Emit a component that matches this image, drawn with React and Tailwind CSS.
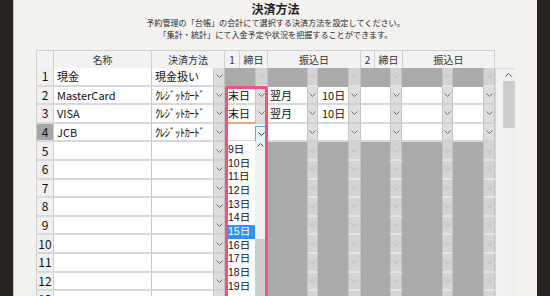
import React from "react";

// column widths for the body grid
const W = {
  num: "w-[18px]",
  name: "w-[98px]",
  mText: "w-[61px]",
  mBtn: "w-[12px]",
  c1Text: "w-[30px]",
  c1Btn: "w-[13px]",
  m1Text: "w-[39px]",
  m1Btn: "w-[11px]",
  d1Text: "w-[30px]",
  d1Btn: "w-[13px]",
  c2Text: "w-[29px]",
  c2Btn: "w-[12px]",
  m2Text: "w-[40px]",
  m2Btn: "w-[11px]",
  d2Text: "w-[30px]",
  d2Btn: "w-[12px]",
};

const rows = [
  { n: 1, name: "現金", method: "現金扱い", on: false },
  { n: 2, name: "MasterCard", method: "ｸﾚｼﾞｯﾄｶｰﾄﾞ", on: true, c1: "末日", m1: "翌月", d1: "10日" },
  { n: 3, name: "VISA", method: "ｸﾚｼﾞｯﾄｶｰﾄﾞ", on: true, c1: "末日", m1: "翌月", d1: "10日", underline: true },
  { n: 4, name: "JCB", method: "ｸﾚｼﾞｯﾄｶｰﾄﾞ", on: true, focus: true, selected: true },
  ...[5, 6, 7, 8, 9, 10, 11, 12, 13].map((n) => ({ n, name: "", method: "", on: false })),
];

const days = ["9日", "10日", "11日", "12日", "13日", "14日", "15日", "16日", "17日", "18日", "19日"];

function Chevron({ color = "#6f6f6f", up = false }) {
  return (
    <svg width="7" height="4" viewBox="0 0 7 4" fill="none">
      <path d={up ? "M0.5 3.5 L3.5 0.5 L6.5 3.5" : "M0.5 0.5 L3.5 3.5 L6.5 0.5"} stroke={color} strokeWidth="1" />
    </svg>
  );
}

function TextCell({ w, on, children, pad = "pl-[3px]", extra = "" }) {
  if (!on) return <div className={`${w} shrink-0 bg-[#aaaaaa]`} />;
  return (
    <div
      className={`${w} ${pad} ${extra} shrink-0 flex items-center overflow-hidden whitespace-nowrap bg-white border-b-2 border-b-[#d8d8d8]`}
    >
      {children}
    </div>
  );
}

function BtnCell({ w, on, focus }) {
  if (focus) {
    return (
      <div className={`${w} shrink-0 flex items-center justify-center bg-[#e5f1fb] border border-[#6ea6dc] mt-[2px]`}>
        <Chevron color="#333" />
      </div>
    );
  }
  return (
    <div
      className={`${w} shrink-0 flex items-center justify-center border-x border-b-2 ${
        on ? "bg-[#dedede] border-x-[#c4c4c4] border-b-[#d0d0d0]" : "bg-[#d3d3d3] border-x-[#c3c3c3] border-b-[#e3e3e3]"
      }`}
    >
      <Chevron color={on ? "#6f6f6f" : "#b9b9b9"} />
    </div>
  );
}

function Row({ r }) {
  return (
    <div className="flex h-[18.6px] text-[11px] text-[#111]">
      <div
        className={`${W.num} shrink-0 flex items-center justify-center text-[12px] border-x border-x-[#cdcdcd] border-b-2 border-b-[#dadada] ${
          r.selected ? "bg-[#a6a6a6]" : "bg-[#f0f0f0]"
        }`}
      >
        {r.n}
      </div>
      <TextCell w={W.name} on extra="border-r border-r-[#c8c8c8]">
        {r.name}
      </TextCell>
      <TextCell w={W.mText} on>
        {r.method.startsWith("ｸ") ? <span className="tracking-[-0.7px]">{r.method}</span> : r.method}
      </TextCell>
      <BtnCell w={W.mBtn} on />
      <TextCell w={W.c1Text} on={r.on} extra={r.underline ? "border-b-[#f4a66d]" : ""}>
        {r.c1}
      </TextCell>
      <BtnCell w={W.c1Btn} on={r.on} focus={r.focus} />
      <TextCell w={W.m1Text} on={r.on} pad="pl-[2px]">
        {r.m1}
      </TextCell>
      <BtnCell w={W.m1Btn} on={r.on} />
      <TextCell w={W.d1Text} on={r.on} pad="pl-[4px]">
        {r.d1}
      </TextCell>
      <BtnCell w={W.d1Btn} on={r.on} />
      <TextCell w={W.c2Text} on={r.on} />
      <BtnCell w={W.c2Btn} on={r.on} />
      <TextCell w={W.m2Text} on={r.on} />
      <BtnCell w={W.m2Btn} on={r.on} />
      <TextCell w={W.d2Text} on={r.on} />
      <BtnCell w={W.d2Btn} on={r.on} />
    </div>
  );
}

const header = [
  ["w-[18px]", ""],
  ["w-[98px]", "名称"],
  ["w-[73px]", "決済方法"],
  ["w-[15px]", "1"],
  ["w-[28px]", "締日"],
  ["w-[93px]", "振込日"],
  ["w-[14px]", "2"],
  ["w-[28px]", "締日"],
  ["w-[92px]", "振込日"],
];

export default function App() {
  return (
    <div className="relative flex h-[296px] w-[550px] overflow-hidden bg-[#2a2421] font-['Noto_Sans_CJK_JP','Noto_Sans',sans-serif]">
      <div className="w-[13px] shrink-0 bg-[#2a2421]" />
      <div className="w-[1px] shrink-0 bg-[#c9c7c4]" />
      <div className="w-[523px] shrink-0 flex flex-col bg-[#f3f2ef]">
        <div className="pt-[4px] text-center font-['Liberation_Sans','Noto_Sans_CJK_JP',sans-serif] text-[12px] font-bold leading-[13px] text-[#222]">
          決済方法
        </div>
        <div className="text-center text-[8.1px] leading-[11.5px] text-[#2a2a2a]">
          <div>予約管理の「台帳」の会計にて選択する決済方法を設定してください。</div>
          <div>「集計・統計」にて入金予定や状況を把握することができます。</div>
        </div>

        <div className="mt-[10px] flex pl-[22px]">
          <div className="w-[459px] shrink-0">
            <div className="flex h-[18px] border-t border-[#cfcfcf] text-[10px] text-[#333]">
              {header.map(([w, label], i) => (
                <div
                  key={i}
                  className={`${w} shrink-0 flex items-center justify-center bg-[#f2f2f2] border-r border-[#cfcfcf] ${
                    i === 0 ? "border-l" : ""
                  }`}
                >
                  {label}
                </div>
              ))}
            </div>
            {rows.map((r) => (
              <Row key={r.n} r={r} />
            ))}
          </div>

          {/* vertical scrollbar */}
          <div className="mt-[18px] flex w-[20px] shrink-0 justify-end border-t border-l border-[#d6d6d6]">
            <div className="flex w-[13px] flex-col items-center bg-[#f0f0f0]">
              <div className="flex h-[11px] items-center justify-center">
                <Chevron color="#555" up />
              </div>
              <div className="mt-[1px] h-[47px] w-[12px] bg-[#cdcdcd]" />
            </div>
          </div>
        </div>
      </div>
      <div className="flex-1 bg-[#2a2421]" />

      {/* open dropdown list for row 4 締日 */}
      <div className="absolute left-[228px] top-[141px] flex h-[160px] w-[37px]">
        <div className="w-[27px] bg-white pt-[2px] font-['Liberation_Sans','Noto_Sans_CJK_JP',sans-serif] text-[10.5px] text-[#111]">
          {days.map((d) => (
            <div
              key={d}
              className={`flex h-[13.7px] items-center overflow-hidden ${d === "15日" ? "bg-[#3390ff] text-white" : ""}`}
            >
              {d}
            </div>
          ))}
        </div>
        <div className="flex w-[10px] flex-col items-center bg-[#f0f0f0]">
          <div className="flex h-[10px] items-center justify-center">
            <Chevron color="#444" up />
          </div>
          <div className="mt-[89px] h-[70px] w-[10px] bg-[#cdcdcd]" />
        </div>
      </div>

      {/* highlight frame */}
      <div className="pointer-events-none absolute left-[225px] top-[86px] h-[230px] w-[43px] rounded-[2px] border-[3px] border-[#f0537d]" />
    </div>
  );
}
